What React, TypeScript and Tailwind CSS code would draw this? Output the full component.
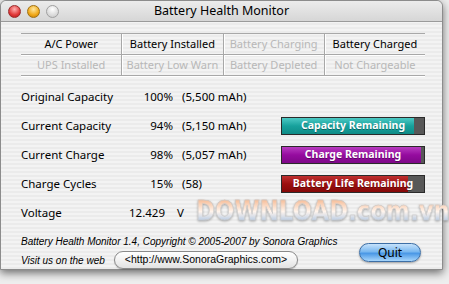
import React from 'react';

const ui = { fontFamily: '"Lucida Grande", "Noto Sans", "DejaVu Sans", sans-serif' };

/** 상태 표 한 칸 */
function Cell({ text, on, last }: { text: string; on: boolean; last?: boolean }) {
  return (
    <div
      className={`flex-1 flex items-center justify-center text-[11px] whitespace-nowrap ${on ? 'text-black' : 'text-[#b8b8b8]'} ${last ? '' : 'border-r border-[#a8a8a8] shadow-[1px_0_0_#fff]'}`}
    >
      {text}
    </div>
  );
}

/** 진행 막대 */
function Bar({ label, pct, fill }: { label: string; pct: number; fill: string }) {
  return (
    <div className="relative w-[144px] h-[18px] border border-[#2a2a2a] bg-[#585858] flex">
      <div className={`h-full ${fill}`} style={{ width: `${pct}%` }} />
      <span className="absolute inset-0 flex items-center justify-center whitespace-nowrap text-white font-bold text-[10.5px] [text-shadow:0_1px_0_rgba(0,0,0,0.35)]">
        {label}
      </span>
    </div>
  );
}

const rows = [
  { label: 'Original Capacity', pct: '100%', value: '(5,500 mAh)', bar: null },
  {
    label: 'Current Capacity', pct: '94%', value: '(5,150 mAh)',
    bar: { label: 'Capacity Remaining', pct: 93, fill: 'bg-[linear-gradient(#4cc9c4,#17a19c_50%,#0f8c87)]' },
  },
  {
    label: 'Current Charge', pct: '98%', value: '(5,057 mAh)',
    bar: { label: 'Charge Remaining', pct: 98, fill: 'bg-[linear-gradient(#b83cc0,#950b9f_50%,#7e0888)]' },
  },
  {
    label: 'Charge Cycles', pct: '15%', value: '(58)',
    bar: { label: 'Battery Life Remaining', pct: 89, fill: 'bg-[linear-gradient(#c03030,#9c0f0f_50%,#840808)]' },
  },
];

export default function App() {
  return (
    <div className="w-[449px] h-[284px] bg-[#eeeeee] overflow-hidden relative" style={ui}>
      <div className="w-[443px] h-[270px] rounded-t-[6px] border border-[#8c8c8c] bg-[#ececec] bg-[image:repeating-linear-gradient(0deg,#ebebeb_0px,#ebebeb_2px,#f3f3f3_2px,#f3f3f3_4px)] shadow-[0_3px_8px_rgba(0,0,0,0.55)] flex flex-col">
        {/* 타이틀 바 */}
        <div className="shrink-0 h-[21px] flex items-center relative border-b border-[#9a9a9a] rounded-t-[6px] bg-[linear-gradient(#ececec,#d6d6d6)]">
          <div className="flex gap-[6px] pl-[7px]">
            <span className="w-[13px] h-[13px] rounded-full border border-[#9a2a2a] bg-[radial-gradient(circle_at_50%_30%,#ffb0b0,#e03838_60%,#b01818)]" />
            <span className="w-[13px] h-[13px] rounded-full border border-[#a07010] bg-[radial-gradient(circle_at_50%_30%,#ffe8a0,#f0a818_60%,#c07808)]" />
            <span className="w-[13px] h-[13px] rounded-full border border-[#a0a0a0] bg-[radial-gradient(circle_at_50%_30%,#ffffff,#dcdcdc_60%,#c4c4c4)]" />
          </div>
          <span className="absolute inset-0 flex items-center justify-center text-[12.5px] text-black">
            Battery Health Monitor
          </span>
        </div>

        <div className="shrink-0 pl-[20px] pr-[17px] flex flex-col">
          {/* 상태 표 */}
          <div className="mt-[11px] border-t border-[#a8a8a8]">
            <div className="flex h-[21px] border-b border-[#a8a8a8] shadow-[0_1px_0_#fff]">
              <Cell text="A/C Power" on />
              <Cell text="Battery Installed" on />
              <Cell text="Battery Charging" on={false} />
              <Cell text="Battery Charged" on last />
            </div>
            <div className="flex h-[21px] border-b border-[#a8a8a8] shadow-[0_1px_0_#fff]">
              <Cell text="UPS Installed" on={false} />
              <Cell text="Battery Low Warn" on={false} />
              <Cell text="Battery Depleted" on={false} />
              <Cell text="Not Chargeable" on={false} last />
            </div>
          </div>

          {/* 수치 */}
          <div className="mt-[6px] flex flex-col text-[11.5px] text-black">
            {rows.map((r) => (
              <div key={r.label} className="h-[29px] flex items-center whitespace-nowrap">
                <span className="w-[112px]">{r.label}</span>
                <span className="w-[40px] text-right">{r.pct}</span>
                <span className="w-[108px] pl-[9px]">{r.value}</span>
                {r.bar && <Bar {...r.bar} />}
              </div>
            ))}
            <div className="h-[29px] flex items-center">
              <span className="w-[108px]">Voltage</span>
              <span>12.429</span>
              <span className="ml-[12px]">V</span>
            </div>
          </div>

          {/* 하단 */}
          <div className="mt-[8px] flex items-start">
            <div
              className="flex-1 flex flex-col text-[10px] italic text-black whitespace-nowrap"
              style={{ fontFamily: '"Liberation Sans", Arial, sans-serif' }}
            >
              <span className="leading-[14px]">Battery Health Monitor 1.4, Copyright © 2005-2007 by Sonora Graphics</span>
              <div className="flex items-center mt-[2px]">
                <span>Visit us on the web</span>
                <span className="ml-[9px] h-[18px] px-[10px] flex items-center rounded-full border border-[#8a8a8a] bg-[linear-gradient(#ffffff,#f2f2f2_50%,#e2e2e2)] not-italic text-[10.5px] shadow-[0_1px_1px_rgba(0,0,0,0.2)]">
                  {'<http://www.SonoraGraphics.com>'}
                </span>
              </div>
            </div>
            <button className="mt-[8px] mr-[4px] w-[62px] h-[19px] rounded-full border border-[#3d6fa6] bg-[linear-gradient(#c6e2fb,#7ab8f0_45%,#4a98e6_55%,#a8d6fb)] text-[12px] text-black shadow-[0_1px_2px_rgba(0,0,0,0.35)]">
              Quit
            </button>
          </div>
        </div>
      </div>

      {/* 워터마크 */}
      <span
        className="absolute left-[196px] top-[192px] origin-left scale-x-[0.88] whitespace-nowrap text-[26px] font-bold bg-[linear-gradient(#f09860,#fff4ec_50%,#6a9fdc)] bg-clip-text text-transparent [-webkit-text-stroke:0.6px_#c8c8c8] [filter:drop-shadow(0_1px_1px_rgba(0,0,0,0.3))]"
        style={{ fontFamily: '"DejaVu Sans", sans-serif' }}
      >
        DOWNLOAD.com.vn
      </span>
    </div>
  );
}
